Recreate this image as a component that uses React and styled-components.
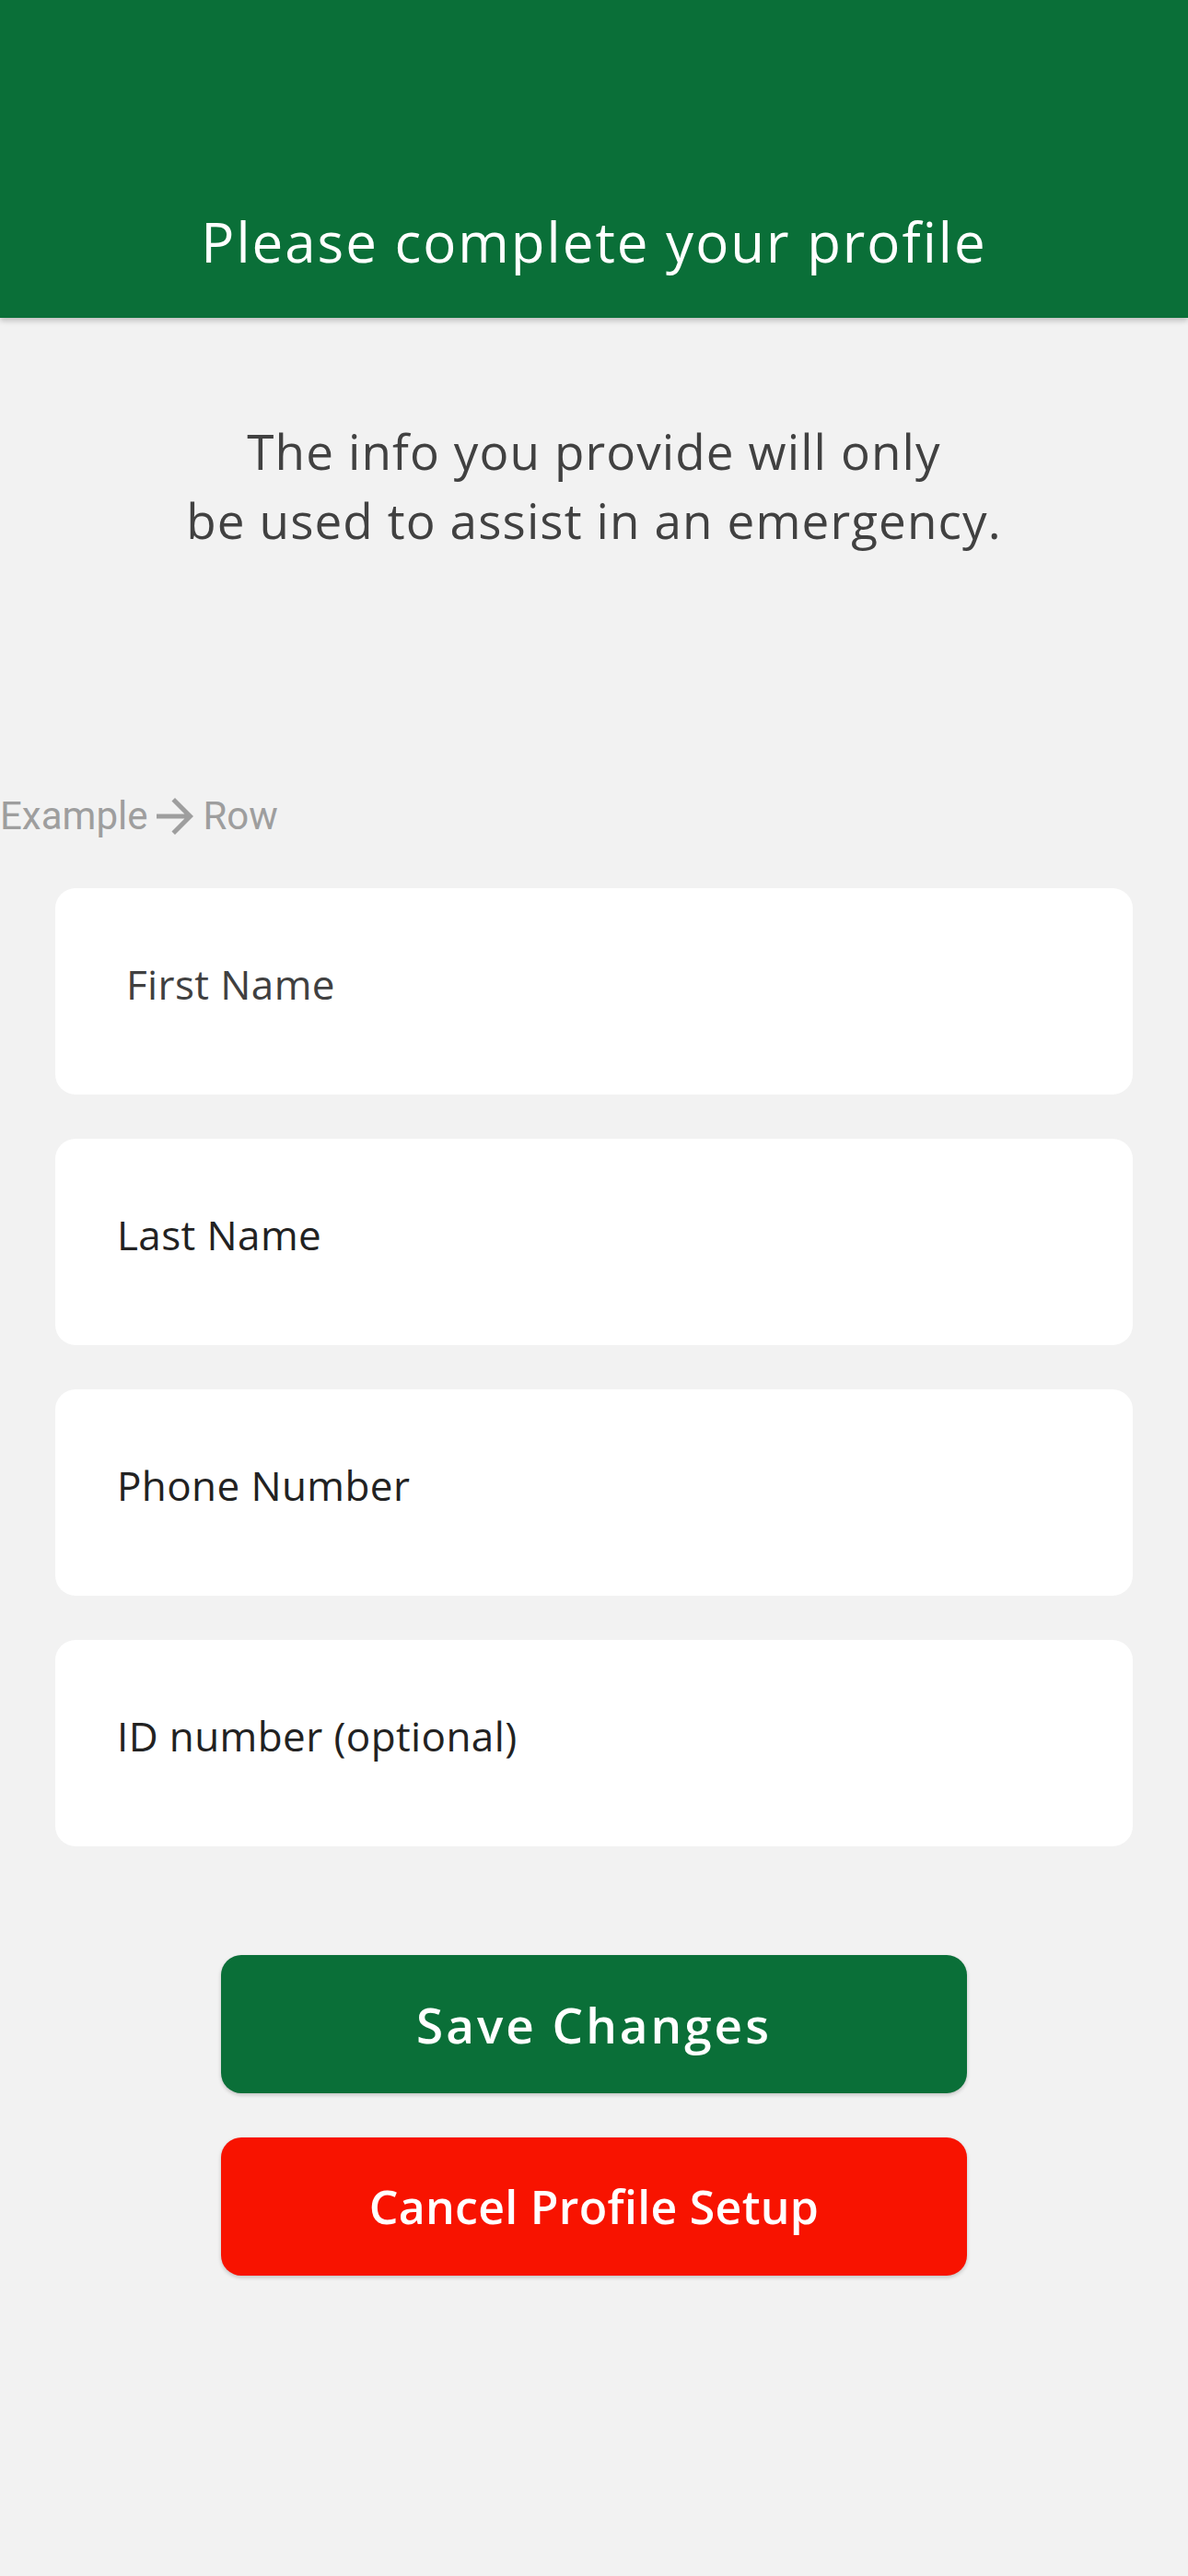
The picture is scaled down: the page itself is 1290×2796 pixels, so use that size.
import React from "react";
import styled, { createGlobalStyle } from "styled-components";

const Global = createGlobalStyle`
  html, body { margin: 0; padding: 0; background: #f2f2f2; }
  body { font-family: "Open Sans", "Liberation Sans", sans-serif; }
  * { box-sizing: border-box; }
`;

const Page = styled.div`
  width: 1290px;
  min-height: 2796px;
  background: #f2f2f2;
  display: flex;
  flex-direction: column;
`;

const Header = styled.header`
  height: 345px;
  background: #0a6f38;
  box-shadow: 0 3px 6px rgba(0, 0, 0, 0.22);
  padding-top: 178px;
  display: flex;
  align-items: center;
  justify-content: center;
`;

const Title = styled.h1`
  margin: 0;
  font-family: "Open Sans", sans-serif;
  font-weight: 400;
  font-size: 60px;
  letter-spacing: 2px;
  color: #ffffff;
  line-height: 1;
`;

const Intro = styled.p`
  margin: 107px 0 0;
  text-align: center;
  font-family: "Open Sans", sans-serif;
  font-size: 53px;
  letter-spacing: 1.1px;
  line-height: 75px;
  color: #414141;
`;

const ExampleRow = styled.div`
  margin-top: 257px;
  display: flex;
  align-items: center;
  height: 53px;
  font-family: Roboto, sans-serif;
  font-size: 42px;
  color: #9e9e9e;
`;

const Fields = styled.div`
  margin: 52px 60px 0;
  display: flex;
  flex-direction: column;
  gap: 48px;
`;

const Field = styled.div`
  height: 224px;
  background: #ffffff;
  border-radius: 22px;
  display: flex;
  align-items: center;
  padding-left: ${(p) => (p.$indent ? 77 : 67)}px;
  padding-bottom: 16px;
  font-family: "Open Sans", sans-serif;
  font-size: 44px;
  letter-spacing: 0.4px;
  color: ${(p) => (p.$muted ? "#404040" : "#222222")};
`;

const Actions = styled.div`
  margin-top: 118px;
  display: flex;
  flex-direction: column;
  align-items: center;
  gap: 48px;
`;

const Button = styled.button`
  width: 810px;
  height: 150px;
  border: none;
  border-radius: 22px;
  background: ${(p) => (p.$danger ? "#f81300" : "#0a6f38")};
  color: #ffffff;
  font-family: "Open Sans", sans-serif;
  font-weight: 600;
  font-size: ${(p) => p.$size}px;
  letter-spacing: ${(p) => p.$tracking}px;
  box-shadow: 0 2px 4px rgba(0, 0, 0, 0.2);
  cursor: pointer;
`;

const Arrow = () => (
  <svg width="60" height="60" viewBox="0 0 24 24" fill="#9e9e9e">
    <path d="M12 4l-1.41 1.41L16.17 11H4v2h12.17l-5.58 5.59L12 20l8-8z" />
  </svg>
);

export default function App() {
  return (
    <Page>
      <Global />
      <Header>
        <Title>Please complete your profile</Title>
      </Header>
      <Intro>
        The info you provide will only
        <br />
        be used to assist in an emergency.
      </Intro>
      <ExampleRow>
        <span>Example</span>
        <Arrow />
        <span>Row</span>
      </ExampleRow>
      <Fields>
        <Field $indent $muted>First Name</Field>
        <Field>Last Name</Field>
        <Field>Phone Number</Field>
        <Field>ID number (optional)</Field>
      </Fields>
      <Actions>
        <Button $size={53} $tracking={3}>Save Changes</Button>
        <Button $danger $size={50} $tracking={0.3}>Cancel Profile Setup</Button>
      </Actions>
    </Page>
  );
}
